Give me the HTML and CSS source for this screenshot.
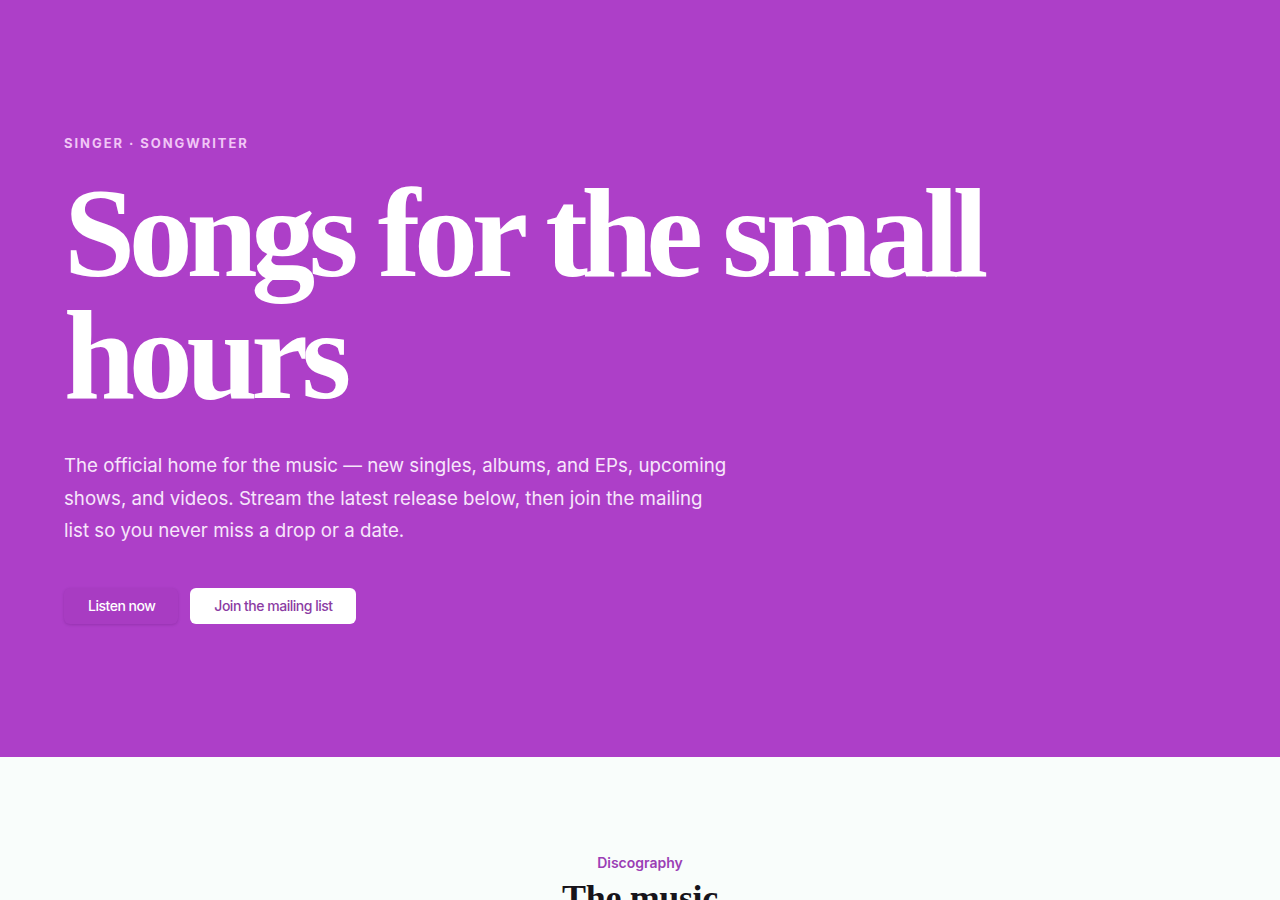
FILE: index.html
```html
<!DOCTYPE html>
<html>
<head>
    <title>Songs for the small hours</title>
    <link rel="stylesheet" href="styles.css">
</head>
<body>
    <!-- Hero -->
    <header class="hero">
        <p class="eyebrow">Singer · Songwriter</p>
        <h1>Songs for the small hours</h1>
        <p class="lead">The official home for the music — new singles, albums, and EPs, upcoming shows, and videos. Stream the latest release below, then join the mailing list so you never miss a drop or a date.</p>
        <div class="actions">
            <a href="#music" class="btn btn-primary">Listen now</a>
            <a href="#join" class="btn btn-light">Join the mailing list</a>
        </div>
    </header>

    <!-- Discography -->
    <section class="music" id="music">
        <p class="kicker">Discography</p>
        <h2>The music</h2>
    </section>
</body>
</html>
```

FILE: styles.css
```css
body {
    margin: 0;
    font-family: Inter, "Noto Sans", sans-serif;
    background: #f9fdfb;
    color: #17141a;
}

.hero {
    background: #ad3fc8;
    color: #fff;
    padding: 133px 64px 133px;
}

.eyebrow {
    margin: 0 0 20px;
    font-size: 13px;
    line-height: 20px;
    font-weight: 700;
    letter-spacing: 0.15em;
    text-transform: uppercase;
    color: #f1c6f6;
}

.hero h1 {
    margin: 0;
    max-width: 1000px;
    font-family: "Liberation Serif", "Times New Roman", serif;
    font-size: 128px;
    line-height: 0.95;
    font-weight: 700;
    letter-spacing: -0.05em;
}

.lead {
    margin: 34px 0 0;
    max-width: 665px;
    font-size: 18.7px;
    line-height: 32.5px;
    color: #f7e6fb;
}

.actions {
    display: flex;
    gap: 12px;
    margin-top: 40px;
}

.btn {
    display: inline-block;
    padding: 0 23px 0 24px;
    height: 36px;
    line-height: 36px;
    border-radius: 6px;
    font-size: 14px;
    font-weight: 500;
    letter-spacing: -0.035em;
    text-decoration: none;
}

.btn-primary {
    background: #a83cc2;
    color: #fff;
    box-shadow: 0 1px 3px rgba(60, 0, 80, 0.2);
}

.btn-light {
    background: #fff;
    color: #8b3ca3;
}

.music {
    padding: 97px 64px 64px;
    text-align: center;
}

.kicker {
    margin: 0 0 6px;
    font-size: 14px;
    font-weight: 600;
    color: #9b3fb5;
}

.music h2 {
    margin: 0;
    font-family: "Liberation Serif", "Times New Roman", serif;
    font-size: 36px;
    font-weight: 700;
    letter-spacing: -0.01em;
}
```
